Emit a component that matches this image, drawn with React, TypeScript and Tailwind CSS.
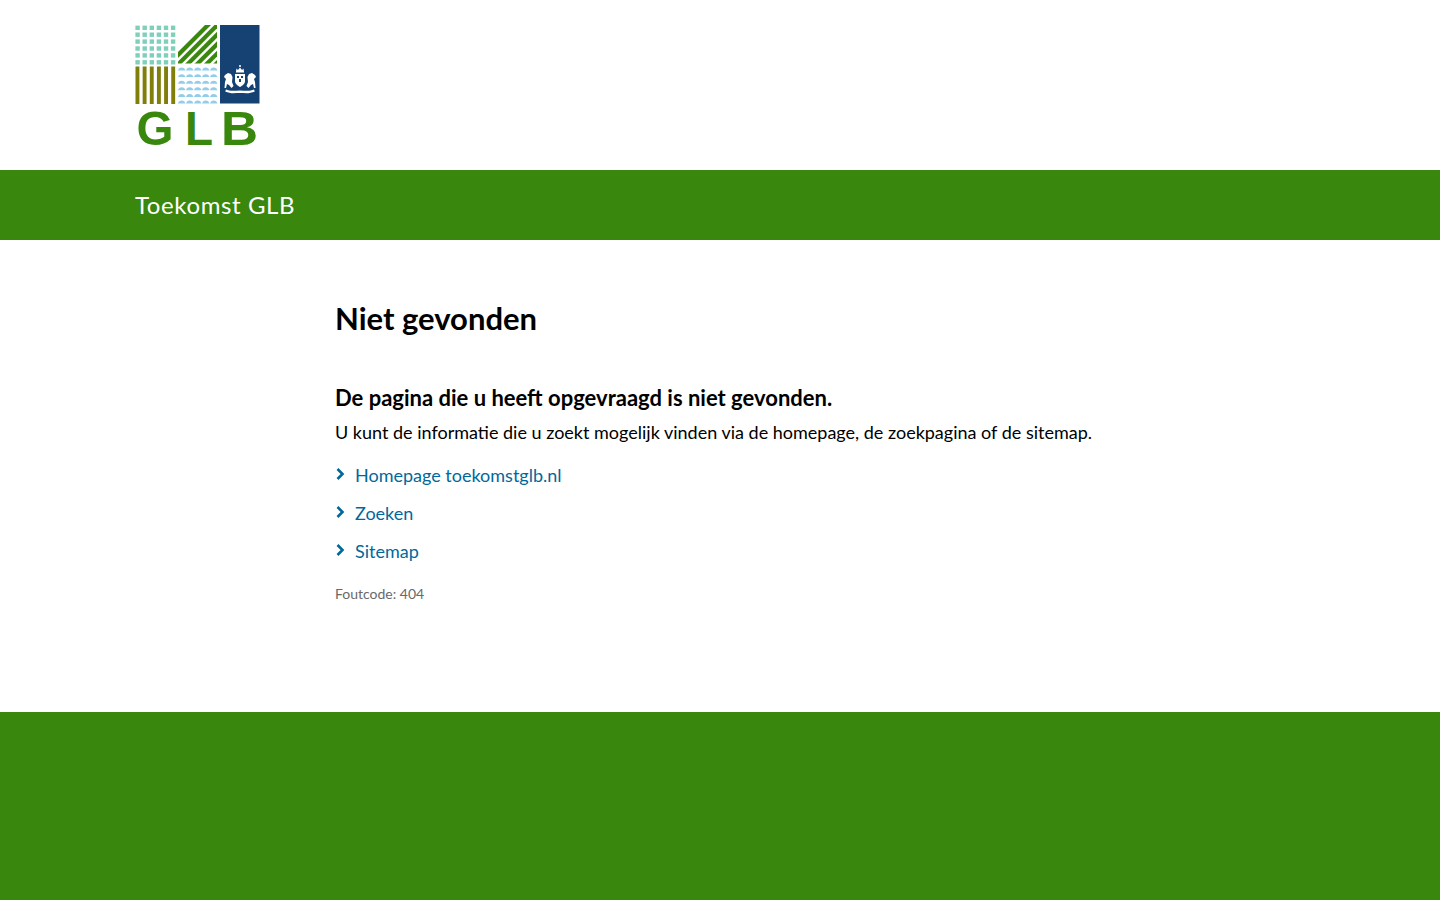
import React from 'react';

const links = ['Homepage toekomstglb.nl', 'Zoeken', 'Sitemap'];

const Logo = () => {
    const cols = [0, 1, 2, 3, 4, 5];
    return (
        <svg width="125" height="120" viewBox="0 0 125 120" className="block">
            {/* dots */}
            {cols.map((r) =>
                cols.map((c) => (
                    <rect key={`${r}-${c}`} x={0.4 + c * 7.1} y={0.6 + r * 6.9} width="4.4" height="4.4" fill="#7fd0bb" />
                ))
            )}
            {/* diagonal stripes */}
            <clipPath id="stripes">
                <rect x="43" y="0" width="39" height="38.5" />
            </clipPath>
            <g clipPath="url(#stripes)" stroke="#3a870e" strokeWidth="4.2">
                {[0, 1, 2, 3, 4, 5, 6, 7].map((i) => (
                    <line key={i} x1={31 + i * 9.4} y1="42" x2={31 + i * 9.4 + 44} y2="-2" />
                ))}
            </g>
            {/* blue panel */}
            <rect x="85" y="0" width="39.5" height="78.5" fill="#154273" />
            {/* olive bars */}
            {cols.map((c) => (
                <rect key={c} x={0.5 + c * 7.15} y="41.5" width="3.9" height="37.5" fill="#7f7f0a" />
            ))}
            {/* water */}
            {cols.map((r) =>
                [0, 1, 2, 3, 4].map((c) => (
                    <path
                        key={`w${r}-${c}`}
                        d={`M${43 + c * 8} ${45.5 + r * 6.6}a3.8 3.8 0 0 1 7.4 0z`}
                        fill="#93cdea"
                    />
                ))
            )}
            {/* coat of arms */}
            <g fill="#fff">
                <path d="M101.5 43.5l1.5 1.5 2-2.5 2 2.5 1.5-1.5 .6 4h-8.2z" />
                <circle cx="105" cy="41" r="1" />
                <path d="M100 49h10v7c0 3-2.5 4.5-5 6-2.5-1.5-5-3-5-6z" />
                <path d="M90 50l3-2 3 1 1.5 3-.5 5 1.5 4-2 2-2.5-3-2-1-1 4h-1.5l.5-6 1-3-2-2z" />
                <path d="M120 50l-3-2-3 1-1.5 3 .5 5-1.5 4 2 2 2.5-3 2-1 1 4h1.5l-.5-6-1-3 2-2z" />
                <path d="M91 64.5c4 2 9 1 14 1s10 1 14-1l.8 2c-5 2.5-10 1.5-14.800 1.500s-9.800 1-14.800-1.500z" />
            </g>
            <g fill="#154273">
                <rect x="102" y="51" width="2" height="2" />
                <rect x="106" y="51" width="2" height="2" />
                <rect x="104" y="54" width="2" height="3" />
            </g>
            {/* wordmark */}
            <g fill="#3a870e" fontFamily="'Liberation Sans', sans-serif" fontWeight="700" fontSize="49">
                <text x="1.500" y="119.500" textLength="37" lengthAdjust="spacingAndGlyphs">G</text>
                <text x="50" y="119.500" textLength="28" lengthAdjust="spacingAndGlyphs">L</text>
                <text x="86" y="119.500" textLength="37" lengthAdjust="spacingAndGlyphs">B</text>
            </g>
        </svg>
    );
};

const App: React.FC = () => {
    return (
        <div className="min-h-[900px] bg-white flex flex-col font-['Lato',sans-serif] text-black">
            <header className="h-[170px] pl-[135px] pt-[25px]">
                <Logo />
            </header>

            <div className="h-[70px] bg-[#39870c] pl-[135px] flex items-center">
                <span className="text-[24px] text-white tracking-[0.6px]">Toekomst GLB</span>
            </div>

            <main className="h-[472px] pl-[335px] pt-[58px]">
                <h1 className="text-[31px] leading-[40px] font-bold">Niet gevonden</h1>
                <h2 className="mt-[45px] text-[22px] leading-[30px] font-bold">
                    De pagina die u heeft opgevraagd is niet gevonden.
                </h2>
                <p className="mt-[6px] text-[18px] leading-[26px]">
                    U kunt de informatie die u zoekt mogelijk vinden via de homepage, de zoekpagina of de sitemap.
                </p>

                <ul className="mt-[17px] flex flex-col gap-[12px]">
                    {links.map((link) => (
                        <li key={link} className="flex items-center h-[26px] text-[18px] text-[#01689b]">
                            <svg width="10" height="14" viewBox="0 0 10 14" className="mr-[10px] mb-[2px]">
                                <path d="M2.500 2l5 5-5 5" fill="none" stroke="#01689b" strokeWidth="2.600" />
                            </svg>
                            <a href="#">{link}</a>
                        </li>
                    ))}
                </ul>

                <p className="mt-[20px] text-[14px] leading-[20px] text-[#696969]">Foutcode: 404</p>
            </main>

            <footer className="h-[188px] bg-[#39870c]" />
        </div>
    );
};

export default App;
